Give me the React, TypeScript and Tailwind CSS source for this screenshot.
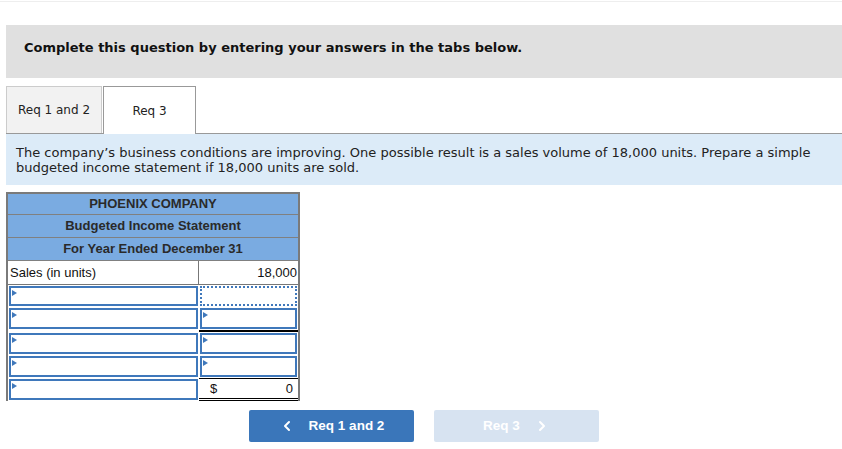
import { ChevronLeft, ChevronRight } from "lucide-react";

const verdana = { fontFamily: '"DejaVu Sans", Verdana, sans-serif' };
const arial = { fontFamily: '"Liberation Sans", Arial, sans-serif' };

function Marker() {
  return (
    <span className="absolute left-[1px] top-[2px] w-0 h-0 border-y-[3px] border-y-transparent border-l-[5px] border-l-[#3f78bb]" />
  );
}

function InputCell({ marker = true, className = "" }: { marker?: boolean; className?: string }) {
  return (
    <div className={`relative h-[23px] p-[1px] ${className}`}>
      <div className="relative h-full border-2 border-[#3f78bb] bg-white">{marker && <Marker />}</div>
    </div>
  );
}

function HeaderRow({ children, className = "h-[23px]" }: { children: React.ReactNode; className?: string }) {
  return (
    <div className={`col-span-2 flex items-center justify-center bg-[#7aabe1] border-b border-[#808080] text-[13px] font-bold text-[#2a2a2a] ${className}`}>
      {children}
    </div>
  );
}

export default function App() {
  return (
    <div className="w-[842px] h-[449px] bg-white relative overflow-hidden">
      <div className="h-[1px] mt-[1px] bg-[#eeeeee]" />
      <div className="ml-[6px] mt-[23px]">
        <div className="h-[53px] bg-[#e0e0e0] flex items-center pl-[18px] pb-[7px]">
          <span className="text-[13px] font-bold text-[#111]" style={verdana}>
            Complete this question by entering your answers in the tabs below.
          </span>
        </div>

        <div className="mt-[8px] flex items-end h-[48px] border-b border-[#999]" style={verdana}>
          <div className="h-[47px] w-[96px] bg-[#f2f2f2] border border-[#cccccc] border-b-0 flex items-center justify-center text-[12px] text-[#222]">
            Req 1 and 2
          </div>
          <div className="ml-[1px] h-[48px] w-[93px] bg-white border border-[#999] border-b-0 -mb-[1px] flex items-center justify-center text-[12px] text-[#222]">
            Req 3
          </div>
        </div>

        <div className="h-[51px] bg-[#dcebf8] pl-[10px] pr-[20px] pt-[11px] text-[13px] leading-[15px] text-[#222]" style={verdana}>
          The company’s business conditions are improving. One possible result is a sales volume of 18,000 units. Prepare a simple
          budgeted income statement if 18,000 units are sold.
        </div>

        <div className="mt-[7px] w-[294px] grid grid-cols-[191px_99px] border-2 border-[#7a7a7a] border-b-0" style={arial}>
          <HeaderRow className="h-[21px]">PHOENIX COMPANY</HeaderRow>
          <HeaderRow>Budgeted Income Statement</HeaderRow>
          <HeaderRow>For Year Ended December 31</HeaderRow>

          <div className="h-[23px] flex items-center pl-[2px] border-r border-[#777] text-[13px] text-[#111]">Sales (in units)</div>
          <div className="h-[23px] flex items-center justify-end pr-[1px] text-[13px] text-[#111]">18,000</div>

          <InputCell className="border-t border-[#777]" />
          <div className="h-[23px] border-t border-[#777] p-[1px]">
            <div className="h-full border-2 border-dotted border-[#3f78bb]" />
          </div>

          <InputCell />
          <div className="border-b-2 border-black">
            <InputCell className="h-[21px]" />
          </div>

          <InputCell />
          <InputCell />

          <InputCell />
          <InputCell />

          <InputCell />
          <div className="h-[23px] flex items-center justify-between pl-[11px] pr-[5px] border-t border-black border-b-[3px] border-b-black border-double text-[13px] text-[#111]">
            <span>$</span>
            <span>0</span>
          </div>
        </div>

        <div className="mt-[9px] flex justify-center gap-[20px]" style={arial}>
          <div className="w-[165px] h-[32px] rounded-[2px] bg-[#3a76ba] flex items-center justify-center text-white text-[13.5px] font-bold">
            <ChevronLeft size={16} strokeWidth={3} className="mr-[14px]" />
            Req 1 and 2
          </div>
          <div className="w-[165px] h-[32px] rounded-[2px] bg-[#d7e3f1] flex items-center justify-center text-white text-[13.5px] font-bold">
            Req 3
            <ChevronRight size={16} strokeWidth={3} className="ml-[14px]" />
          </div>
        </div>
      </div>
    </div>
  );
}
